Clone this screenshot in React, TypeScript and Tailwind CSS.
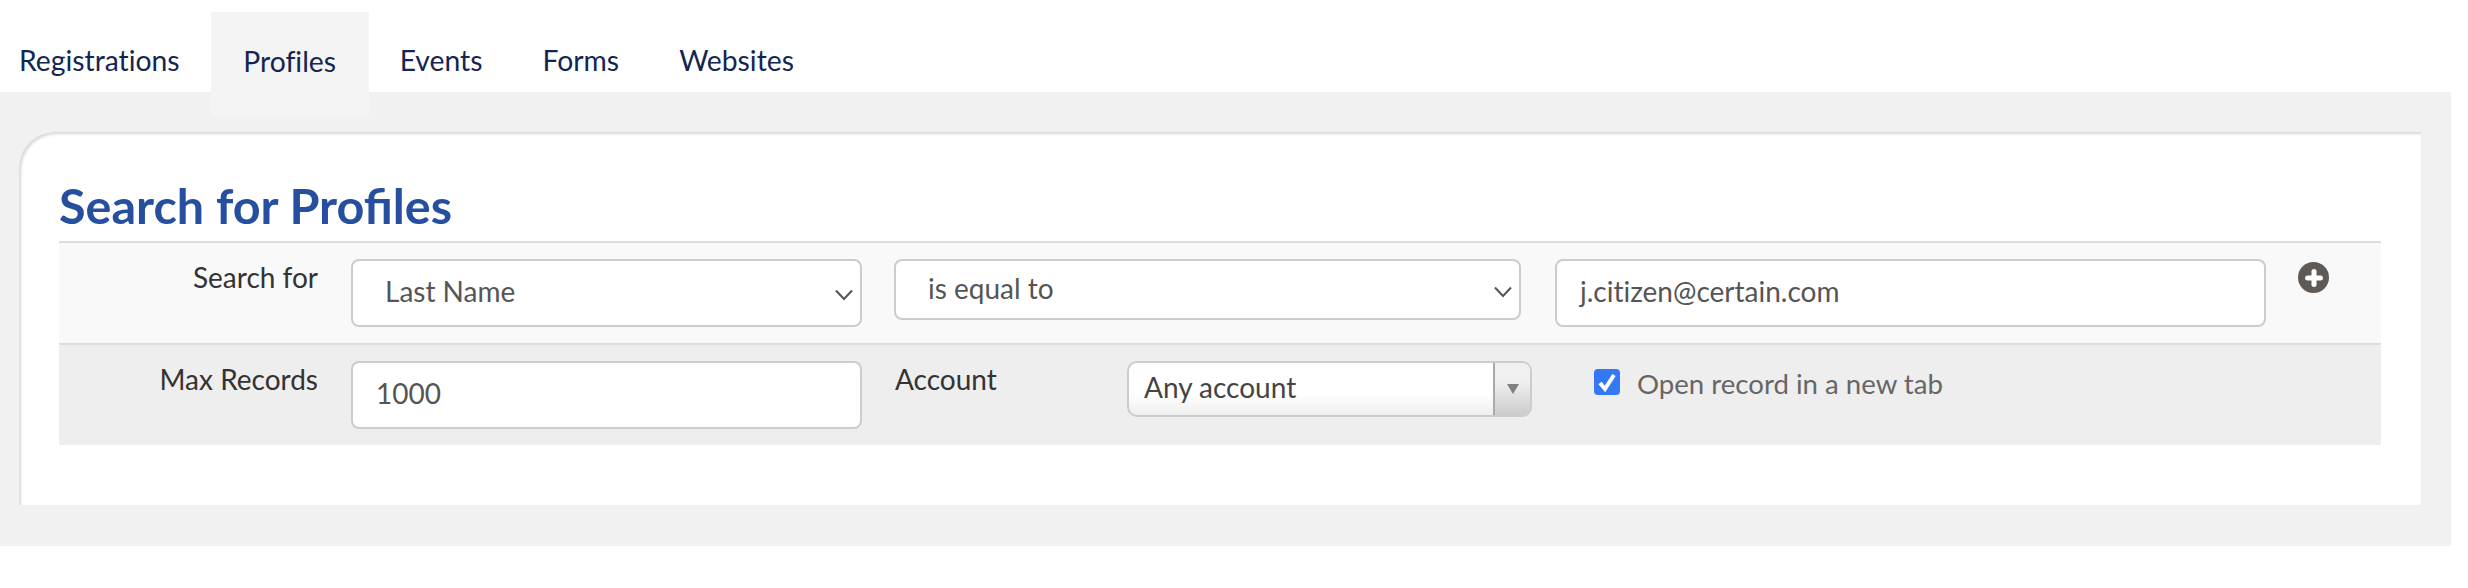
import { Plus } from "lucide-react";

const tabs = ["Registrations", "Profiles", "Events", "Forms", "Websites"];

function Tabs() {
  return (
    <div className="flex h-[92px] pl-[19px] text-[28.3px] text-[#14264f] [font-variant-ligatures:none]">
      {tabs.map((tab, i) =>
        tab === "Profiles" ? (
          <div
            key={tab}
            className="relative z-10 mt-[12px] h-[104px] w-[158px] bg-[#f4f4f4] pt-[29px] text-center leading-[40px]"
          >
            {tab}
          </div>
        ) : (
          <div key={tab} className={`pt-[40px] leading-[40px] ${i === 0 ? "pr-[31px]" : i === 2 ? "pl-[31px] pr-[30px]" : "px-[30px]"}`}>
            {tab}
          </div>
        ),
      )}
    </div>
  );
}

function Chevron() {
  return (
    <svg viewBox="0 0 18 12" fill="none" className="mr-[7px] mt-[4px] h-[12px] w-[18px] text-[#555555]">
      <path d="M1 1.5 L9 10 L17 1.5" stroke="currentColor" strokeWidth="2" />
    </svg>
  );
}

function Field({ value, className, select, textClass }: { value: string; className: string; select?: boolean; textClass: string }) {
  return (
    <div className={`flex items-center justify-between rounded-[8px] border-2 border-[#cccccc] bg-white text-[28px] text-[#555555] [font-variant-ligatures:none] ${className}`}>
      <span className={textClass}>{value}</span>
      {select && <Chevron />}
    </div>
  );
}

export default function App() {
  return (
    <div className="h-[588px] w-[2468px] bg-white font-['Lato',sans-serif]">
      <Tabs />
      <div className="w-[2451px] bg-[#f1f1f1] pb-[41px] pl-[19px] pr-[30px] pt-[40px]">
        <div className="h-[373px] rounded-tl-[36px] bg-white pl-[40px] pr-[40px] shadow-[inset_2px_2px_3px_#d8d8d8]">
          <h1 className="flex h-[109px] items-end pb-[8px] text-[48.5px] font-bold leading-[56px] text-[#264f9f]">Search for Profiles</h1>

          <div className="flex h-[104px] border-y-2 border-[#dddddd] bg-[#f9f9f9] pt-[16px]">
            <div className="w-[259px] text-right text-[28px] leading-[36px] text-[#333333] [font-variant-ligatures:none]">Search for</div>
            <Field value="Last Name" select className="ml-[33px] h-[68px] w-[511px]" textClass="mt-[-5px] pl-[32px]" />
            <Field value="is equal to" select className="ml-[32px] h-[61px] w-[627px]" textClass="mt-[-4px] pl-[32px]" />
            <Field value="j.citizen@certain.com" className="ml-[34px] h-[68px] w-[711px]" textClass="mt-[-5px] pl-[23px]" />
            <div className="ml-[32px] mt-[3px] flex h-[31px] w-[31px] items-center justify-center rounded-full bg-[#5f5a55]">
              <Plus className="h-[22px] w-[22px] text-white" strokeWidth={5.5} />
            </div>
          </div>

          <div className="flex h-[100px] bg-[#eeeeee] pt-[16px]">
            <div className="w-[259px] text-right text-[28px] leading-[36px] text-[#333333]">Max Records</div>
            <Field value="1000" className="ml-[33px] h-[68px] w-[511px]" textClass="mt-[-5px] pl-[23px]" />
            <div className="ml-[33px] w-[232px] text-[28px] leading-[36px] text-[#333333]">Account</div>
            <div className="flex h-[56px] w-[405px] items-stretch overflow-hidden rounded-[10px] border-2 border-[#cccccc] bg-gradient-to-b from-white from-[60%] to-[#eeeeee] text-[28px] text-[#444444]">
              <span className="flex-1 pl-[15px] leading-[48px]">Any account</span>
              <span className="flex w-[37px] items-center justify-center border-l-2 border-[#aaaaaa] bg-gradient-to-b from-[#f0f0f0] from-[35%] to-[#cccccc]">
                <span className="h-0 w-0 border-x-[6px] border-t-[10px] border-x-transparent border-t-[#808080]" />
              </span>
            </div>
            <div className="ml-[62px] mt-[8px] flex h-[26px] w-[26px] items-center justify-center self-start rounded-[4px] bg-[#3478f6]">
              <svg viewBox="0 0 26 26" fill="none" className="h-[26px] w-[26px]">
                <path d="M6 14 L11 20 L20 6" stroke="white" strokeWidth="4" />
              </svg>
            </div>
            <span className="ml-[17px] mt-[8px] text-[27.6px] leading-[30px] text-[#666666] [font-variant-ligatures:none]">Open record in a new tab</span>
          </div>
        </div>
      </div>
    </div>
  );
}
